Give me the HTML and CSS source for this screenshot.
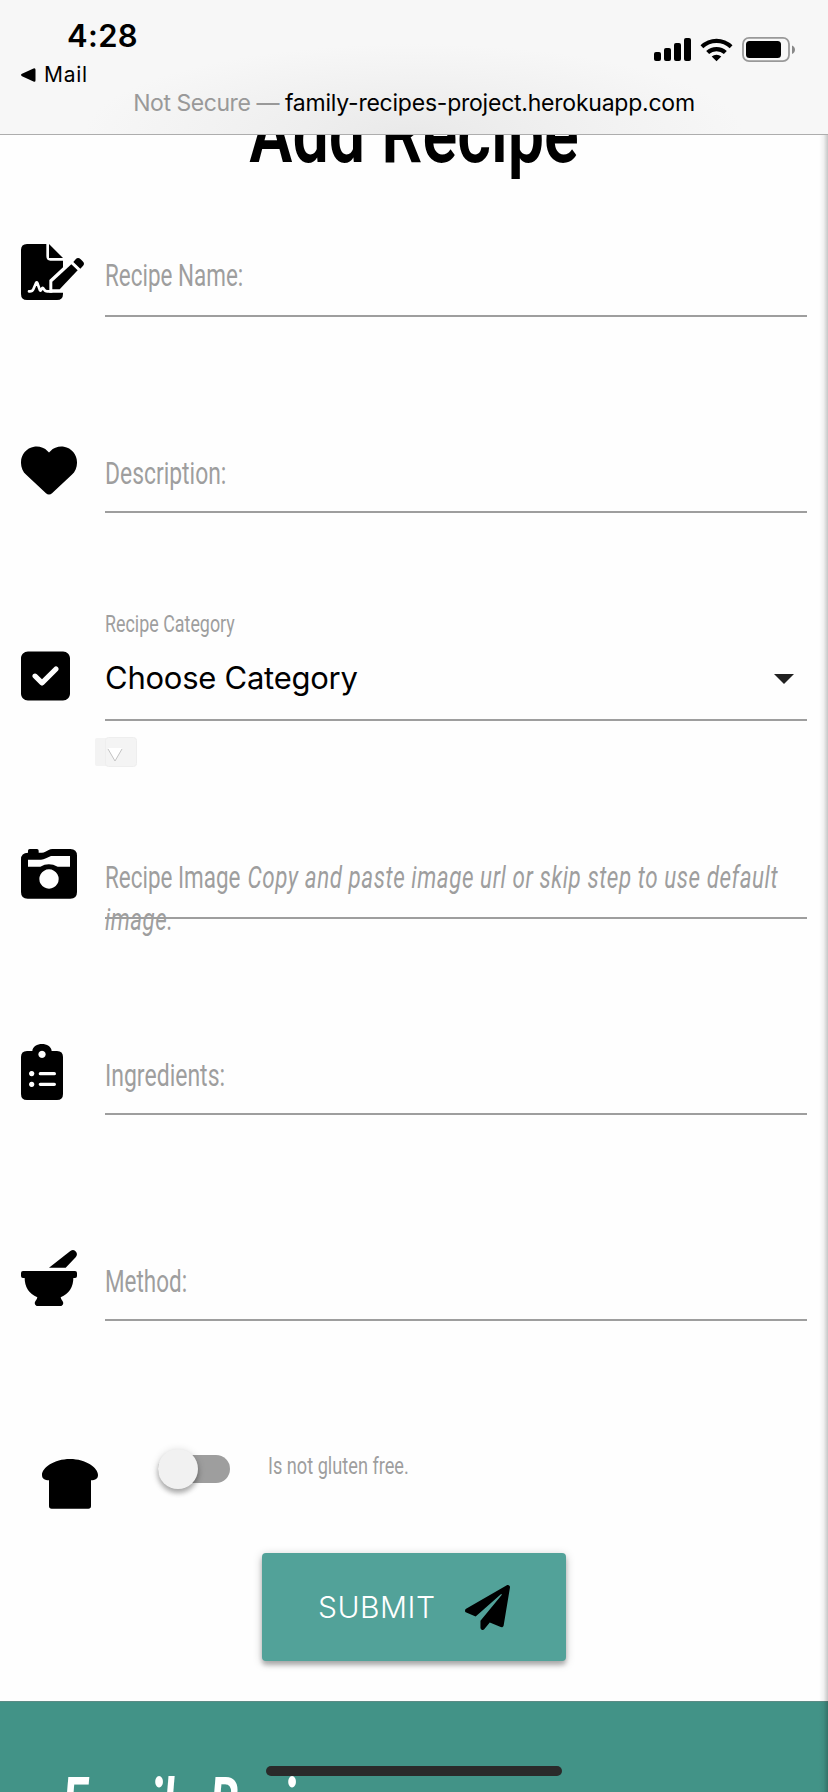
FILE: index.html
```html
<!DOCTYPE html>
<html lang="en">
<head>
<meta charset="utf-8">
<title>Add Recipe</title>
<link rel="stylesheet" href="styles.css">
</head>
<body>
<div class="screen">
  <header class="browser-bar">
    <div class="status">
      <div class="clock">4:28</div>
      <svg class="status-icons" width="144" height="28" viewBox="0 0 144 28">
        <rect x="1" y="15" width="7" height="9" rx="2"/><rect x="11" y="11" width="7" height="13" rx="2"/><rect x="21" y="6" width="7" height="18" rx="2"/><rect x="31" y="1" width="7" height="23" rx="2"/>
        <path d="M47.5 8.3a23 23 0 0 1 32 0l-2.8 3a19 19 0 0 0-26.400 0zM53.200 14a15 15 0 0 1 20.600 0l-2.900 3a11 11 0 0 0-14.800 0zM58.700 19.600a7.500 7.500 0 0 1 9.600 0L63.500 24.200z"/>
        <rect x="90" y=".9" width="46" height="23.200" rx="6" fill="none" stroke="#999" stroke-width="1.800"/>
        <rect x="93" y="4" width="35" height="17" rx="3.500"/><path d="M139 8.500c4 1.500 4 7 0 8.500z" fill="#888"/>
      </svg>
    </div>
    <div class="back"><svg width="15" height="14" viewBox="0 0 15 14"><path d="M1 5.800 12.500.4q2-.8 2 1.300v10.600q0 2.100-2 1.300L1 8.200q-2-1.200 0-2.400z"/></svg><span>Mail</span></div>
    <div class="address"><span class="insecure">Not Secure —</span><span>family-recipes-project.herokuapp.com</span></div>
  </header>

  <main class="page">
    <h1 class="title"><span>Add Recipe</span></h1>
    <form class="form">
      <div class="field">
        <svg class="icon" width="63" height="56" viewBox="0 0 189 168">
          <path d="M18 0H76V36Q76 50 88 50H126V150Q126 168 108 168H18Q0 168 0 150V18Q0 0 18 0ZM84 0 126 42H84Z"/>
          <path d="M85 108 155 43 184 72 126 130V146H85Z" fill="#fff"/>
          <path d="M24 142Q34 143 37 136L45 117Q48 112 50 120L57 139Q59 142 62 135Q65 128 69 136Q72 143 82 142H92" fill="none" stroke="#fff" stroke-width="8" stroke-linecap="round"/>
          <path d="M94 113 151 61 170 79 116 136H94Z"/><path d="m157 54 7-8q7-8 15 0l6 6q8 7 0 15l-7 7z"/>
        </svg>
        <div class="control tall"><label class="label name"><span>Recipe Name:</span></label></div>
      </div>
      <div class="field roomy">
        <svg class="icon" width="56" height="56" viewBox="0 0 512 512"><path d="M47.600 300.400 228.300 469.100c7.500 7 17.400 10.900 27.700 10.900s20.200-3.900 27.700-10.900L464.400 300.400c30.400-28.300 47.600-68 47.600-109.500v-5.800c0-69.900-50.500-129.500-119.400-141C347 36.500 300.600 51.400 268 84L256 96 244 84c-32.600-32.600-79-47.500-124.600-39.900C50.500 55.600 0 115.200 0 185.100v5.800c0 41.500 17.200 81.200 47.600 109.500z"/></svg>
        <div class="control"><label class="label desc"><span>Description:</span></label></div>
      </div>
      <div class="field">
        <svg class="icon" width="49" height="56" viewBox="0 0 448 512"><path d="M64 32C28.700 32 0 60.700 0 96v320c0 35.300 28.700 64 64 64h320c35.300 0 64-28.700 64-64V96c0-35.300-28.700-64-64-64zM337 209 209 337c-9.400 9.400-24.600 9.400-33.900 0l-64-64c-9.400-9.400-9.400-24.600 0-33.900s24.600-9.400 33.900 0l47 47L303 175c9.400-9.400 24.600-9.400 33.900 0s9.400 24.600 0 34z"/></svg>
        <div class="control tall select">
          <label class="caption"><span>Recipe Category</span></label>
          <span class="value">Choose Category</span>
          <svg class="caret" width="20" height="10" viewBox="0 0 20 10"><path d="M0 0h20L10 10z" fill="#212121"/></svg>
          <span class="native"><svg width="42" height="30" viewBox="0 0 42 30"><rect y="1" width="20" height="28" rx="2" fill="#f3f3f3"/><rect x="10.500" y=".5" width="31" height="29" rx="3" fill="#f4f4f4" stroke="#eee"/><path d="M13 11h14l-7 13z" fill="#fff"/><path d="m13 12 7 12 7-12" fill="none" stroke="#c4c4c4"/></svg></span>
        </div>
      </div>
      <div class="field">
        <svg class="icon" width="56" height="56" viewBox="0 0 168 168"><path fill-rule="evenodd" d="M21 17V14q0-5 5-5H48q5 0 5 5v6h10q5 0 10-3l10-5q5-3 11-3H148q20 0 20 20V138q0 20-20 20H20Q0 158 0 138V40Q0 20 21 20ZM21 41V62H58Q83 48 110 62H147V30H90L75 37Q67 41 60 41ZM84 70a29 29 0 1 0 .1 0Z"/></svg>
        <div class="control tall"><label class="label image"><span>Recipe Image <i>Copy and paste image url or skip step to use default</i></span><br><span class="wrap"><i>image.</i></span></label></div>
      </div>
      <div class="field roomy">
        <svg class="icon" width="42" height="56" viewBox="0 0 126 168"><path fill-rule="evenodd" d="M34 21C36-7 90-7 92 21H108Q126 21 126 39V150Q126 168 108 168H18Q0 168 0 150V39Q0 21 18 21ZM63 20a11 11 0 1 0 .1 0ZM32 81a8 8 0 1 0 .1 0ZM58 84a5 5 0 0 0 0 10h42a5 5 0 0 0 0-10ZM32 113a8 8 0 1 0 .1 0ZM58 116a5 5 0 0 0 0 10h42a5 5 0 0 0 0-10Z"/></svg>
        <div class="control"><label class="label ingr"><span>Ingredients:</span></label></div>
      </div>
      <div class="field roomy">
        <svg class="icon" width="56" height="56" viewBox="0 0 168 168"><path d="M84 53 148 3q10-7 17 2 6 8-1 17L134 53ZM6 63H162q6 0 6 6v9q0 6-6 6h-5q0 41-38 58 1 7 6 12 5 9-4 14H47q-9-5-4-14 5-5 6-12Q11 125 11 84H6q-6 0-6-6v-9q0-6 6-6Z"/></svg>
        <div class="control"><label class="label meth"><span>Method:</span></label></div>
      </div>
      <div class="gluten">
        <svg class="icon" width="56" height="56" viewBox="0 0 168 168"><path d="M84 9c48 0 84 26 84 48 0 11-8 16-21 16v77q0 8-8 8H29q-8 0-8-8V73C8 73 0 68 0 57 0 35 36 9 84 9Z"/></svg>
        <span class="lever"></span>
        <span class="caption gtext"><span>Is not gluten free.</span></span>
      </div>
      <button class="submit" type="button"><span>SUBMIT</span><svg width="45" height="45" viewBox="0 0 512 512"><path d="M476 3.200 12.500 270.600c-18.100 10.400-15.800 35.600 2.200 43.200L121 358.400l287.300-253.200c5.500-4.900 13.300 2.600 8.600 8.300L176 407v80.500c0 23.600 28.500 32.900 42.500 15.800L282 426l124.600 52.200c14.200 6 30.400-2.900 33-18.200l72-432C515 7.800 493.300-6.800 476 3.200z"/></svg></button>
    </form>
  </main>

  <footer class="footer"><div class="brand"><span>Family Recipes</span></div></footer>
  <div class="edge"></div>
  <div class="home"></div>
</div>
</body>
</html>
```
FILE: styles.css
```css
* { box-sizing: border-box; }
body { margin: 0; background: #fefefe; color: #000; font-family: Inter, "Liberation Sans", sans-serif; }
.screen { position: relative; width: 828px; height: 1792px; overflow: hidden; display: flex; flex-direction: column; }

.browser-bar { position: relative; z-index: 2; height: 135px; flex: none; border-bottom: 1px solid #adadad; background: radial-gradient(ellipse 330px 90px at 50% 100%, #e9e9e9, #f1f1f1 55%, #f7f7f7 100%); }
.status { display: flex; justify-content: space-between; height: 62px; padding: 17px 31px 0 67px; }
.clock { font-size: 31px; line-height: 38px; font-weight: 600; letter-spacing: .3px; }
.status-icons { margin-top: 20px; }
.back { display: flex; align-items: center; gap: 8px; height: 26px; padding-left: 21px; font-size: 21px; line-height: 26px; font-weight: 400; letter-spacing: .7px; }
.address { display: flex; justify-content: center; gap: 6px; height: 30px; line-height: 30px; font-size: 23px; letter-spacing: -.23px; white-space: nowrap; }
.insecure { color: #999; letter-spacing: -.45px; }

.page { flex: none; height: 1566px; }
.title { margin: -51px 0 0; height: 105px; font: 600 84px/100px Roboto, sans-serif; text-align: center; white-space: nowrap; }
.title span { display: inline-block; transform: scaleX(.77); }
.form { padding: 55px 21px 0; display: flex; flex-direction: column; }
.field { display: grid; grid-template-columns: 84px 702px; align-items: start; height: 198px; }
.field:nth-child(2), .field:nth-child(5), .field:nth-child(6) { height: 206px; }
.icon { display: block; overflow: visible; }
.control { height: 71px; padding-top: 11px; border-bottom: 2px solid #9e9e9e; }
.control.tall { height: 73px; }
.label, .caption { display: block; color: #9e9e9e; font-family: Roboto, sans-serif; font-weight: 450; white-space: nowrap; }
.label { font-size: 31px; line-height: 42px; }
.caption { font-size: 24px; line-height: 30px; }
.label span, .caption span { display: inline-block; transform: scaleX(.724); transform-origin: 0 50%; }
.label.desc span { transform: scaleX(.738); }
.label.ingr span { transform: scaleX(.742); }
.image i { margin-left: 2px; letter-spacing: .75px; }
.image .wrap i { margin-left: 0; letter-spacing: .6px; }
.select { position: relative; display: flex; align-items: center; justify-content: space-between; padding: 0 13px 0 0; }
.select .caption { position: absolute; left: 0; top: -39px; }
.select .caption span { transform: scaleX(.745); }
.value { font-size: 31px; line-height: 40px; letter-spacing: -.25px; padding-bottom: 12px; }
.caret { margin-bottom: 10px; }
.native { position: absolute; left: -10px; top: 89px; height: 30px; }

.gluten { display: grid; grid-template-columns: 116px 110px 1fr; height: 97px; padding-left: 21px; align-items: start; }
.lever { position: relative; width: 72px; height: 28px; margin-top: -1px; border-radius: 14px; background: #9e9e9e; }
.lever::before { content: ""; position: absolute; left: 0; top: -6px; width: 40px; height: 40px; border-radius: 50%; background: #f1f1f1; box-shadow: 0 4px 5px rgba(0,0,0,.28), 0 1px 9px rgba(0,0,0,.14); }
.gtext { margin-top: -5px; }
.gtext span { transform: scaleX(.757); }
.submit { align-self: center; display: flex; align-items: center; gap: 30px; width: 304px; height: 108px; padding: 0 0 0 56px; border: 0; border-radius: 4px; background: #52a299; color: #fff; font: 350 30px/40px Inter, sans-serif; letter-spacing: .5px; box-shadow: 0 4px 4px rgba(0,0,0,.22), 0 2px 10px rgba(0,0,0,.22); }
.submit svg { fill: #000; }

.footer { flex: none; height: 91px; overflow: hidden; background: #429387; border-top: 1px solid #5c8b85; padding: 57px 0 0 62px; }
.brand { font: italic 700 72px/86px Lato, sans-serif; color: #fff; white-space: nowrap; }
.brand span { display: inline-block; transform: scaleX(.69); transform-origin: 0 50%; }
.edge { position: absolute; top: 135px; right: 0; bottom: 0; width: 9px; background: linear-gradient(90deg, transparent, rgba(0,0,0,.05) 50%, rgba(0,0,0,.22)); }
.home { position: absolute; z-index: 3; left: 266px; top: 1766px; width: 296px; height: 10px; border-radius: 5px; background: #2a2a2a; }
```
